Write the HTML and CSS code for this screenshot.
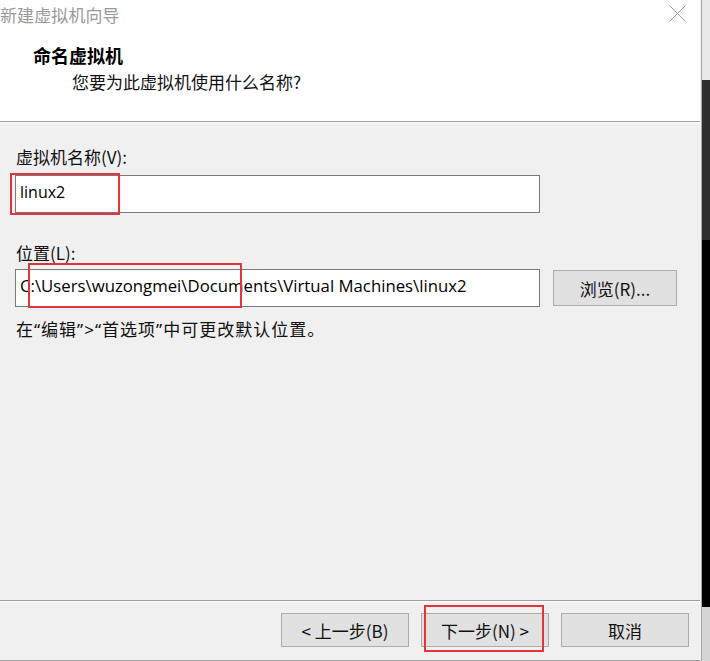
FILE: index.html
```html
<!DOCTYPE html>
<html lang="zh-CN">
<head>
<meta charset="utf-8">
<title>新建虚拟机向导</title>
<link rel="stylesheet" href="styles.css">
</head>
<body>
<div class="screen">
  <div class="window">
    <div class="titlebar">
      <span class="title">新建虚拟机向导</span>
      <svg class="close" width="17" height="17" viewBox="0 0 17 17"><path d="M0.5 0.5 L16.5 16.5 M16.5 0.5 L0.5 16.5" stroke="#9a9a9a" stroke-width="1" fill="none"/></svg>
    </div>
    <div class="header">
      <div class="heading">命名虚拟机</div>
      <div class="subtitle">您要为此虚拟机使用什么名称?</div>
    </div>
    <div class="content">
      <div class="label first">虚拟机名称(V):</div>
      <div class="field name">
        <span class="value">linux2</span>
        <span class="mark mark-name"></span>
      </div>
      <div class="label second">位置(L):</div>
      <div class="row">
        <div class="field path">
          <span class="value path-text">C:\Users\wuzongmei\Documents\Virtual Machines\linux2</span>
          <span class="mark mark-path"></span>
        </div>
        <button class="btn browse">浏览(R)...</button>
      </div>
      <div class="note">在<span class="q">“</span>编辑<span class="q">”&gt;“</span>首选项<span class="q">”</span>中可更改默认位置。</div>
    </div>
    <div class="footer">
      <button class="btn">&lt; 上一步(B)</button>
      <button class="btn next">下一步(N) &gt;<span class="mark mark-next"></span></button>
      <button class="btn">取消</button>
    </div>
  </div>
  <div class="outside"></div>
</div>
</body>
</html>
```
FILE: styles.css
```css
* { box-sizing: border-box; }
html, body { margin: 0; padding: 0; }
body {
  font-family: "Noto Sans CJK SC", "Noto Sans", sans-serif;
  color: #000;
  background: #f0f0f0;
}
.screen {
  display: flex;
  width: 710px;
  height: 661px;
  overflow: hidden;
}
.window {
  width: 702px;
  height: 661px;
  display: flex;
  flex-direction: column;
  background: #f0f0f0;
  border-right: 1px solid #a8a8a8;
  padding-right: 1px;
}
.outside {
  flex: 1;
  background: linear-gradient(to bottom, #e8e8e8 0 80px, #2e2e2e 80px 240px, #000 240px 607px, #d6d6d6 607px);
}
.titlebar {
  height: 34px;
  background: #fff;
  display: flex;
  align-items: flex-start;
  justify-content: space-between;
  padding-right: 14px;
}
.title {
  font-size: 17px;
  line-height: 30px;
  color: #9a9a9a;
  margin-left: 0;
  letter-spacing: 0.1px;
}
.close { margin-top: 5px; }
.header {
  height: 88px;
  background: #fff;
  border-bottom: 1px solid #a0a0a0;
  padding-top: 9px;
}
.heading {
  font-size: 18px;
  line-height: 24px;
  font-weight: 700;
  padding-left: 33px;
}
.subtitle {
  font-size: 17px;
  line-height: 24px;
  margin-top: 3px;
  padding-left: 72px;
  color: #111;
}
.content {
  flex: 1;
  border-top: 2px solid #f6f6f6;
  padding: 22px 0 0 15px;
}
.label {
  font-size: 17px;
  line-height: 22px;
  padding-left: 1px;
  color: #111;
}
.label.second { margin-top: 29px; }
.field {
  position: relative;
  width: 525px;
  height: 38px;
  background: #fff;
  border: 1px solid #7a7a7a;
  display: flex;
  align-items: center;
  padding: 0 0 5px 4px;
}
.field.name { margin-top: 7px; }
.value {
  font-family: "Open Sans", "Noto Sans", sans-serif;
  font-size: 16px;
  color: #000;
  white-space: nowrap;
}
.path-text { font-size: 16.75px; }
.row {
  display: flex;
  align-items: center;
  gap: 13px;
  margin-top: 5px;
}
.btn {
  position: relative;
  font-family: "Noto Sans CJK SC", "Open Sans", sans-serif;
  font-size: 17px;
  color: #111;
  background: #e1e1e1;
  border: 1px solid #adadad;
  padding: 0;
  height: 34px;
  width: 128px;
}
.btn.browse {
  width: 124px;
  height: 36px;
}
.note {
  margin-top: 11px;
  font-size: 17px;
  line-height: 22px;
  padding-left: 1px;
  color: #111;
  letter-spacing: 1px;
}
.q {
  font-family: "Noto Sans", sans-serif;
}
.footer {
  height: 61px;
  border-top: 1px solid #a0a0a0;
  border-bottom: 1px solid #a0a0a0;
  box-shadow: inset 0 2px 0 #f8f8f8;
  display: flex;
  justify-content: flex-end;
  gap: 12px;
  padding: 12px 11px 0 0;
}
.mark {
  position: absolute;
  border: 2px solid #e0353c;
  pointer-events: none;
}
.mark-name { left: -6px; top: -3px; width: 110px; height: 42px; }
.mark-path { left: 12px; top: -7px; width: 214px; height: 45px; }
.mark-next { left: 2px; top: -9px; width: 120px; height: 47px; }
```
